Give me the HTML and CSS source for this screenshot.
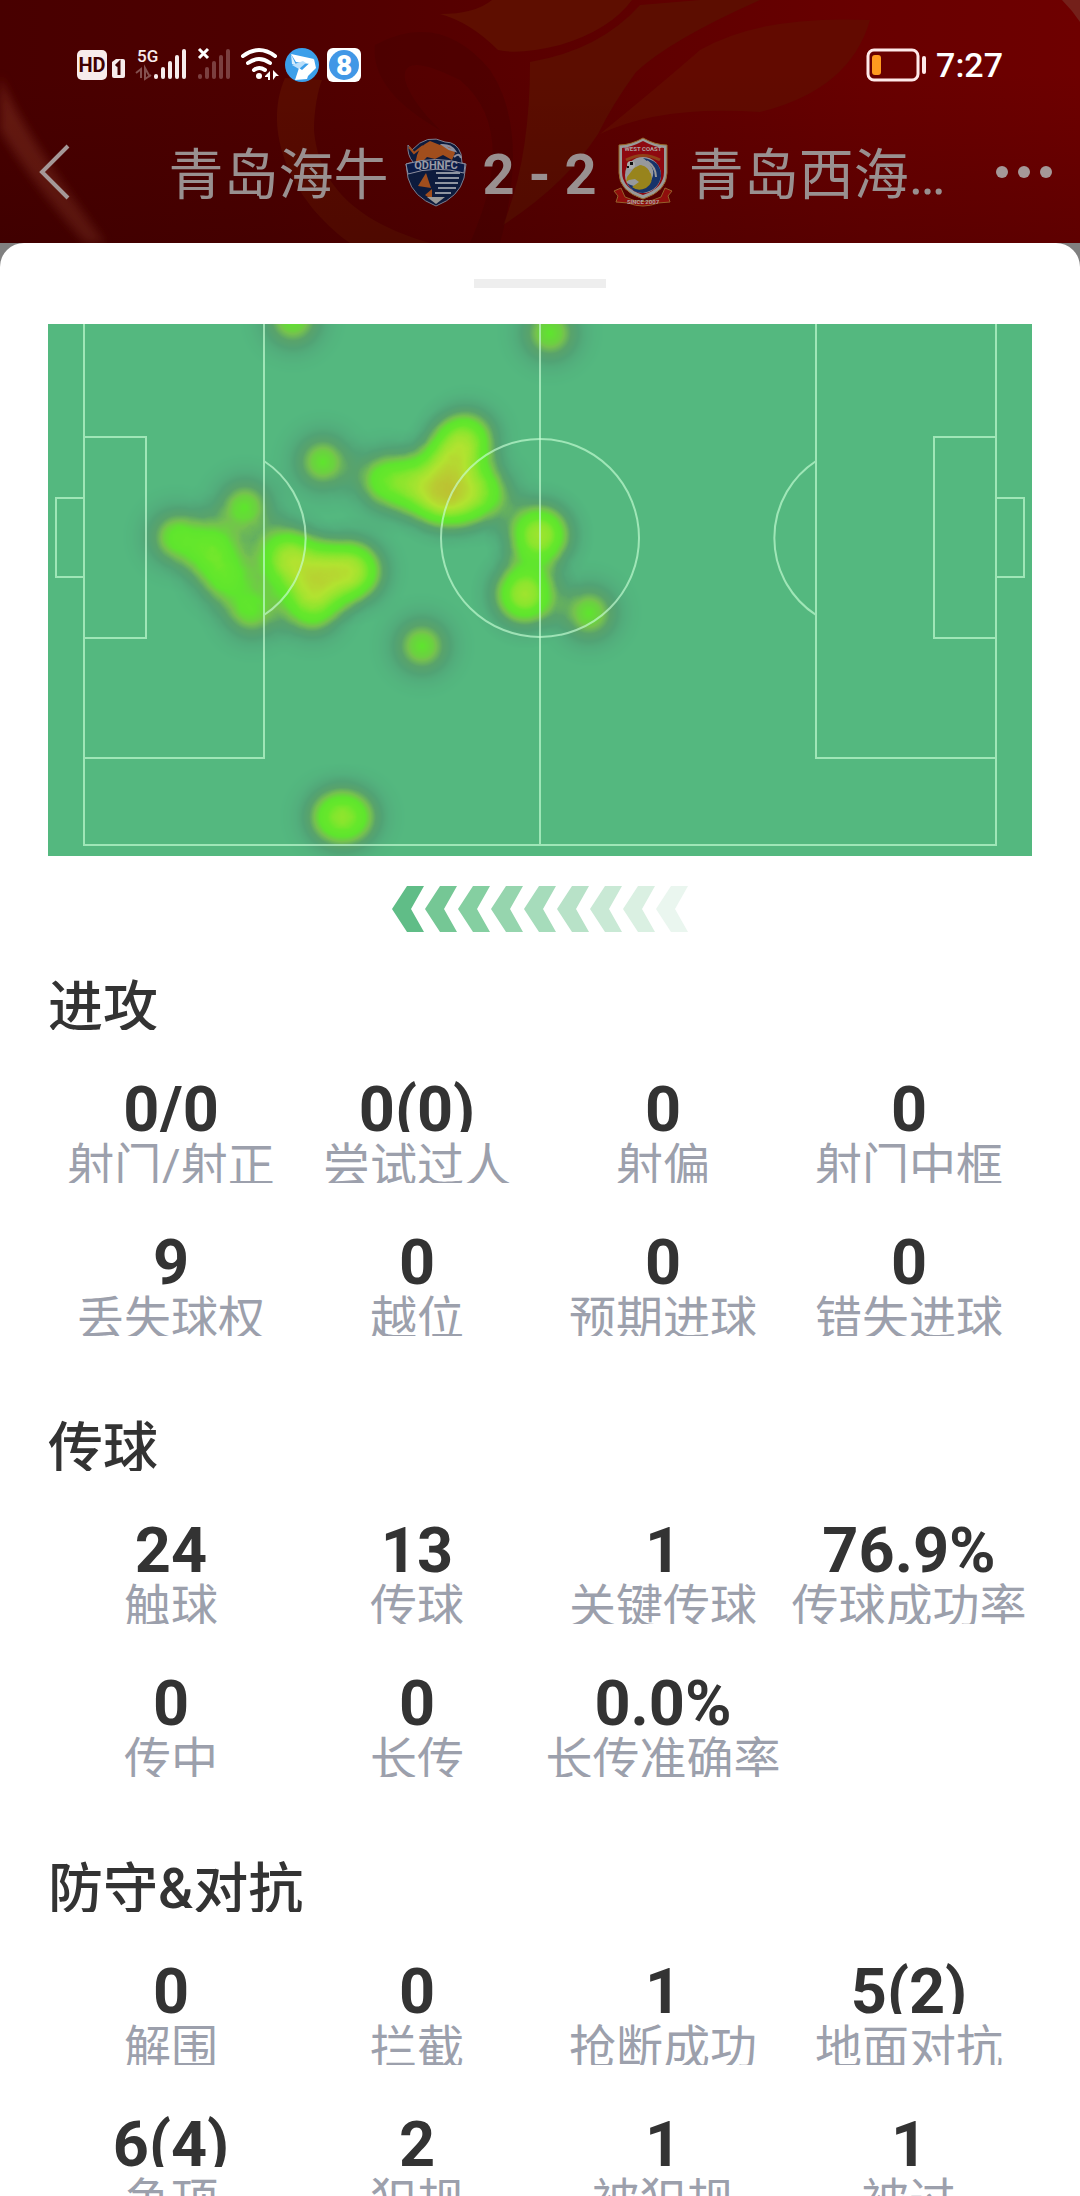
FILE: index.html
```html
<!DOCTYPE html>
<html lang="zh-CN">
<head>
<meta charset="utf-8">
<meta name="viewport" content="width=device-width, initial-scale=1">
<title>青岛海牛 2 - 2 青岛西海岸</title>
<link rel="stylesheet" href="styles.css">
</head>
<body>
<header class="top">
  <svg class="top-art" viewBox="0 0 1080 243" preserveAspectRatio="xMidYMid slice" aria-hidden="true">
    <defs>
      <linearGradient id="base" x1="0" y1="0" x2="1" y2="0">
        <stop offset="0" stop-color="#480000"/><stop offset=".25" stop-color="#4e0000"/>
        <stop offset=".5" stop-color="#5a0000"/><stop offset=".8" stop-color="#680000"/><stop offset="1" stop-color="#6e0000"/>
      </linearGradient>
      <linearGradient id="fall" x1="0" y1="0" x2="0" y2="1">
        <stop offset=".3" stop-color="#200000" stop-opacity="0"/><stop offset="1" stop-color="#200000" stop-opacity=".2"/>
      </linearGradient>
      <filter id="soft"><feGaussianBlur stdDeviation="5"/></filter>
    </defs>
    <rect width="1080" height="243" fill="url(#base)"/>
    <path d="M285 78C262 130 290 200 350 243H430C350 220 318 180 314 130C314 110 318 90 322 80Z" fill="#5a0b00"/>
    <path d="M440 14Q475 14 492 0H632Q610 30 560 45Q520 55 498 50Q470 22 440 14Z" fill="#5e0e00"/>
    <path d="M530 62Q600 50 640 5L700 0H760Q670 40 636 72Q612 105 598 134Q565 185 503 225Q530 160 530 62Z" fill="#5c0d00"/>
    <path d="M600 134Q660 85 700 50Q760 15 870 20Q850 90 760 112Q660 105 600 134Z" fill="#620a00"/>
    <path d="M375 45Q440 10 490 70Q530 130 500 243H470Q520 130 460 80Q400 50 405 80Q410 100 440 130Q370 90 375 45Z" fill="#480000" opacity=".5"/>
    <path d="M0 75Q15 120 105 243H85Q30 180 0 130Z" fill="#7a2a1c" opacity=".6" filter="url(#soft)"/>
    <path d="M1062 0Q1072 10 1080 22V0Z" fill="#74201a"/>
    <rect width="1080" height="243" fill="url(#fall)"/>
  </svg>

  <div class="status">
    <svg class="status-icons" width="284" height="36" viewBox="0 0 284 36" role="img" aria-label="HD 5G Wi-Fi">
      <rect y="3" width="30" height="30" rx="5" fill="#f7ecec"/>
      <text class="hd" x="15" y="25" text-anchor="middle">HD</text>
      <path d="M35 15l4-3h7q2 0 2 2v15q0 2-2 2H37q-2 0-2-2Z" fill="#f7ecec"/>
      <path d="M39 19l3-3v12" fill="none" stroke="#400000" stroke-width="3"/>
      <text class="net" x="60" y="15">5G</text>
      <path d="M59 26l5-4v9M73 30l-5-9v11l6-4" fill="none" stroke="#84504f" stroke-width="2"/>
      <g fill="#f7ecec"><rect x="77" y="27" width="4" height="5" rx="2"/><rect x="84" y="20" width="4" height="12" rx="2"/><rect x="91" y="14" width="4" height="18" rx="2"/><rect x="98" y="8" width="4" height="24" rx="2"/><rect x="105" y="2" width="4" height="30" rx="2"/></g>
      <g fill="#7b3f3f"><rect x="121" y="27" width="4" height="5" rx="2"/><rect x="128" y="20" width="4" height="12" rx="2"/><rect x="135" y="14" width="4" height="18" rx="2"/><rect x="142" y="8" width="4" height="24" rx="2"/><rect x="149" y="2" width="4" height="30" rx="2"/></g>
      <path d="M122 2l9 9M131 2l-9 9" stroke="#fff" stroke-width="3"/>
      <g fill="none" stroke="#fff" stroke-width="4" stroke-linecap="round"><path d="M166 9Q182-3 198 9M171 16Q182 8 193 16M177 23Q182 19 188 23"/></g>
      <circle cx="182" cy="29" r="3" fill="#fff"/>
      <path d="M188 29l5-5v9h-2v-3h-3zM196 23l6 6h-3l-3 4z" fill="#fff"/>
      <circle cx="225" cy="18" r="17" fill="#3b9fea"/>
      <path d="M214 7L237 12 233 17 219 15Z" fill="#fff"/>
      <path d="M214 7l1 10 4 1z" fill="#d8eefc"/>
      <path d="M215 18l11-4 3 2-7 6z" fill="#b9dffb"/>
      <path d="M237 12l2 9-8 8-1 3-12 1 4-12 3 2z" fill="#fff"/>
      <rect x="250" y="1" width="34" height="34" rx="6" fill="#fff"/>
      <circle cx="267" cy="18" r="15" fill="#4197e6"/>
      <text class="eight" x="267" y="28" text-anchor="middle">8</text>
    </svg>
    <div class="status-right">
      <svg width="62" height="34" viewBox="0 0 62 34" role="img" aria-label="电量低">
        <rect x="2" y="2" width="50" height="30" rx="6" fill="none" stroke="#ffe9e9" stroke-width="3"/>
        <rect x="6" y="7" width="9" height="20" rx="3" fill="#ff9a1f"/>
        <rect x="56" y="8" width="4" height="18" rx="2" fill="#ffe9e9"/>
      </svg>
      <time>7:27</time>
    </div>
  </div>

  <nav class="match">
    <button class="icon-btn back" aria-label="返回"><svg width="32" height="56" viewBox="0 0 32 56"><path d="M30 2L4 28l26 26" fill="none" stroke="#a59898" stroke-width="4"/></svg></button>
    <h1 class="title">
      <span class="team">青岛海牛</span>
      <svg class="crest" width="62" height="70" viewBox="0 0 62 70" role="img" aria-label="青岛海牛">
        <path d="M3 8l4 5Q22-4 40 5q12 0 16 12l1 9 4 1-2 14Q54 60 31 69 8 60 3 41L1 27l7-2Q2 18 3 8Z" fill="#0d1b3d" stroke="#7e7e8e"/>
        <path d="M11 23q2-12 9-16l5-3 10 4q12-1 15 8l-3 7-9-5-8 4-8-2-7 7q-5 1-4-4Z" fill="#a14e1d"/>
        <path d="M4 10l5 6 9-7" fill="none" stroke="#a14e1d" stroke-width="2"/>
        <path d="M38 8q8 0 12 6l-6-2zM49 20q5-5 7 1" fill="none" stroke="#8e8e9e" stroke-width="2"/>
        <path d="M1 27Q31 18 60 27l-1 9Q31 28 3 37Z" fill="#0b1c48" stroke="#8e8e9e"/>
        <text class="crest-name" x="31" y="32" text-anchor="middle">QDHNFC</text>
        <path d="M9 38l20-3v29Q12 55 9 38Z" fill="#0d1b3d"/><path d="M21 36l5 15-13-2zM20 58l7-6v11z" fill="#a14e1d"/>
        <path d="M31 36h24M33 41h21M30 46h23M33 51h18M30 56h16" stroke="#8e94a0" stroke-width="2"/>
        <path d="M22 60h18l-9 7z" fill="#9a9a9a"/>
      </svg>
      <span class="score">2 - 2</span>
      <svg class="crest" width="60" height="70" viewBox="0 0 60 70" role="img" aria-label="青岛西海岸">
        <path d="M1 54l7-3 4 9q18 9 36 0l4-9 7 3-4 5 2 6-12 1q-15 6-30 0l-12-1 2-6Z" fill="#900e0c" stroke="#96602a"/>
        <path d="M30 1Q42 8 54 8v28Q54 54 30 62 6 54 6 36V8Q18 8 30 1Z" fill="#999" stroke="#98682a"/>
        <path d="M30 4Q41 10 51 11v24Q51 51 30 58 9 51 9 35V11Q19 10 30 4Z" fill="#8e0810"/>
        <text class="crest-tiny" text-anchor="middle" x="30" y="14">WEST COAST</text>
        <path d="M13 23Q30 14 47 23" fill="none" stroke="#904018" stroke-width="3"/>
        <circle cx="30" cy="38" r="18" fill="#97999c"/>
        <path d="M30 21q18 2 18 18-2 14-18 17-11 0-16-10 13 8 23-1 9-13-7-24Z" fill="#16336a"/>
        <path d="M14 40l7-9 6-3 7 1 4 8q3 9-5 14-8 4-14-1l7-5-4-3-6 1-3 2z" fill="#98841c"/>
        <path d="M34 24q9 6 9 16M29 27q8 3 9 9" fill="none" stroke="#999" stroke-width="2"/>
        <circle cx="18" cy="28" r="4" fill="#aaa"/><path d="M17 25h3v3h-3zM14 29h2v2h-2z" fill="#111"/>
        <text class="crest-tiny" text-anchor="middle" x="30" y="67">SINCE 2007</text>
      </svg>
      <span class="team">青岛西海…</span>
    </h1>
    <button class="icon-btn more" aria-label="更多"><svg width="58" height="14" viewBox="0 0 58 14" fill="#a59898"><circle cx="6" cy="7" r="6"/><circle cx="28" cy="7" r="6"/><circle cx="50" cy="7" r="6"/></svg></button>
  </nav>
</header>

<div class="backdrop">
<main class="sheet">
  <div class="handle"></div>

  <svg class="pitch" viewBox="0 0 984 532" role="img" aria-label="热力图">
    <defs>
      <radialGradient id="spot">
        <stop offset="0" stop-color="#000" stop-opacity=".5"/>
        <stop offset=".2" stop-color="#000" stop-opacity=".44"/>
        <stop offset=".4" stop-color="#000" stop-opacity=".28"/>
        <stop offset=".6" stop-color="#000" stop-opacity=".13"/>
        <stop offset=".8" stop-color="#000" stop-opacity=".04"/>
        <stop offset="1" stop-color="#000" stop-opacity="0"/>
      </radialGradient>
      <circle id="p" r="56" fill="url(#spot)"/>
      <filter id="heat" filterUnits="userSpaceOnUse" x="0" y="0" width="984" height="532" color-interpolation-filters="sRGB">
        <feColorMatrix values="0 0 0 1 0  0 0 0 1 0  0 0 0 1 0  0 0 0 0 1"/>
        <feComponentTransfer>
          <feFuncR type="table" tableValues=".33 .325 .32 .35 .46 .37 .40 .56 .70 .74 .78"/>
          <feFuncG type="table" tableValues=".725 .69 .64 .64 .76 .90 .91 .90 .89 .76 .60"/>
          <feFuncB type="table" tableValues=".50 .49 .46 .42 .31 .18 .17 .18 .19 .20 .21"/>
        </feComponentTransfer>
      </filter>
    </defs>
    <g filter="url(#heat)">
      <use href="#p" x="245" y="-4"/><use href="#p" x="502" y="9"/>
      <use href="#p" x="275" y="138"/><use href="#p" x="197" y="183"/>
      <use href="#p" x="374" y="322"/><use href="#p" x="541" y="289"/>
      <use href="#p" x="285" y="493"/><use href="#p" x="304" y="493"/>
      <use href="#p" x="128" y="213"/><use href="#p" x="164" y="224"/><use href="#p" x="177" y="252"/><use href="#p" x="204" y="286"/>
      <use href="#p" x="236" y="231"/><use href="#p" x="244" y="237"/><use href="#p" x="275" y="248"/><use href="#p" x="300" y="247"/><use href="#p" x="264" y="284"/><use href="#p" x="264" y="264"/><use href="#p" x="308" y="247"/>
      <use href="#p" x="336" y="156"/><use href="#p" x="362" y="160"/><use href="#p" x="420" y="113"/><use href="#p" x="410" y="124"/><use href="#p" x="390" y="170"/><use href="#p" x="396" y="171"/><use href="#p" x="438" y="169"/><use href="#p" x="400" y="142"/><use href="#p" x="412" y="172"/>
      <use href="#p" x="491" y="209"/><use href="#p" x="492" y="213"/><use href="#p" x="476" y="269"/><use href="#p" x="478" y="271"/>
    </g>
    <g fill="none" stroke="#c8ffd6" stroke-opacity=".65" stroke-width="2">
      <path d="M36 0V521H948V0M492 0V521M216 0V434H36M768 0V434H948M36 113H98V314H36M948 113H886V314H948M36 174H8V253H36M948 174H976V253H948M216 137A92 92 0 0 1 216 291M768 137A92 92 0 0 0 768 291"/>
      <circle cx="492" cy="214" r="99"/>
    </g>
  </svg>

  <svg class="direction" width="296" height="46" viewBox="0 0 296 46" role="img" aria-label="进攻方向">
    <defs><path id="c" d="M0 23L15 0H32L19 23L32 46H15Z"/></defs>
    <use href="#c" fill="#60bd87"/><use href="#c" x="33" fill="#75c795"/><use href="#c" x="66" fill="#85cfa1"/>
    <use href="#c" x="99" fill="#96d5ae"/><use href="#c" x="132" fill="#a6dcbb"/><use href="#c" x="165" fill="#b8e2c8"/>
    <use href="#c" x="198" fill="#c9e9d5"/><use href="#c" x="231" fill="#daf0e2"/><use href="#c" x="264" fill="#eaf6ef"/>
  </svg>

  <section class="group">
    <h2>进攻</h2>
    <dl class="stats">
      <div class="stat"><dt>射门/射正</dt><dd>0/0</dd></div>
      <div class="stat"><dt>尝试过人</dt><dd>0(0)</dd></div>
      <div class="stat"><dt>射偏</dt><dd>0</dd></div>
      <div class="stat"><dt>射门中框</dt><dd>0</dd></div>
      <div class="stat"><dt>丢失球权</dt><dd>9</dd></div>
      <div class="stat"><dt>越位</dt><dd>0</dd></div>
      <div class="stat"><dt>预期进球</dt><dd>0</dd></div>
      <div class="stat"><dt>错失进球</dt><dd>0</dd></div>
    </dl>
  </section>
  <section class="group">
    <h2>传球</h2>
    <dl class="stats">
      <div class="stat"><dt>触球</dt><dd>24</dd></div>
      <div class="stat"><dt>传球</dt><dd>13</dd></div>
      <div class="stat"><dt>关键传球</dt><dd>1</dd></div>
      <div class="stat"><dt>传球成功率</dt><dd>76.9%</dd></div>
      <div class="stat"><dt>传中</dt><dd>0</dd></div>
      <div class="stat"><dt>长传</dt><dd>0</dd></div>
      <div class="stat"><dt>长传准确率</dt><dd>0.0%</dd></div>
    </dl>
  </section>
  <section class="group">
    <h2>防守&amp;对抗</h2>
    <dl class="stats">
      <div class="stat"><dt>解围</dt><dd>0</dd></div>
      <div class="stat"><dt>拦截</dt><dd>0</dd></div>
      <div class="stat"><dt>抢断成功</dt><dd>1</dd></div>
      <div class="stat"><dt>地面对抗</dt><dd>5(2)</dd></div>
      <div class="stat"><dt>争顶</dt><dd>6(4)</dd></div>
      <div class="stat"><dt>犯规</dt><dd>2</dd></div>
      <div class="stat"><dt>被犯规</dt><dd>1</dd></div>
      <div class="stat"><dt>被过</dt><dd>1</dd></div>
    </dl>
  </section>
</main>
</div>
</body>
</html>
```
FILE: styles.css
```css
* { box-sizing: border-box; margin: 0; padding: 0; }

body {
  display: flex;
  flex-direction: column;
  height: 100vh;
  overflow: hidden;
  background: #fff;
  font-family: Roboto, "Noto Sans CJK SC", sans-serif;
  color: #333;
}

.top {
  position: relative;
  flex: none;
  padding: 46px 0 31px;
  background: #500000;
  overflow: hidden;
}
.top-art { position: absolute; inset: 0; width: 100%; height: 100%; }

.status, .match { position: relative; display: flex; align-items: center; justify-content: space-between; }
.status { height: 38px; padding: 0 77px; }
.status-icons, .status-right svg { display: block; }
.status-right { display: flex; align-items: center; gap: 8px; }
.status-right time { font-size: 34px; line-height: 38px; font-weight: 500; color: #fff; }

.hd { font-size: 20px; font-weight: 700; fill: #400000; }
.net { font-size: 17px; font-weight: 500; fill: #f7ecec; }
.eight { font-size: 28px; font-weight: 900; fill: #fff; }
.crest-name { font-size: 11px; font-weight: 700; fill: #9a9aa4; }
.crest-tiny { font-size: 6px; font-weight: 700; fill: #b0a0a0; }

.match { height: 80px; margin-top: 48px; padding: 0 26px 0 38px; }
.icon-btn { display: flex; border: 0; background: none; cursor: pointer; }
.title {
  display: flex;
  flex: 1;
  align-items: center;
  justify-content: center;
  gap: 16px;
  padding-left: 48px;
  font-size: 55px;
  line-height: 80px;
  font-weight: 400;
  color: #999090;
  white-space: nowrap;
}
.team, .score { padding-top: 6px; }
.score { font-size: 56px; font-weight: 700; }

.backdrop { flex: 1; min-height: 0; background: #808080; }
.sheet {
  height: 100%;
  padding: 36px 48px 0;
  border-radius: 24px 24px 0 0;
  background: #fff;
  overflow: hidden;
}
.handle { width: 132px; height: 9px; margin: 0 auto 36px; background: #eee; }
.pitch { display: block; width: 100%; background: #54b97f; }
.direction { display: block; margin: 30px auto 44px; }

.group { margin-bottom: 41px; }
.group h2 { height: 54px; margin-bottom: 40px; overflow: hidden; font-size: 55px; line-height: 62px; font-weight: 500; }
.stats { display: grid; grid-template-columns: repeat(4, 1fr); }
.stat { display: flex; flex-direction: column-reverse; gap: 5px; padding-bottom: 40px; text-align: center; white-space: nowrap; }
.stat dd { height: 62px; overflow: hidden; font-size: 63px; line-height: 80px; font-weight: 700; }
.stat dt { height: 46px; overflow: hidden; font-size: 47px; line-height: 58px; color: #9ca0ac; }
```
